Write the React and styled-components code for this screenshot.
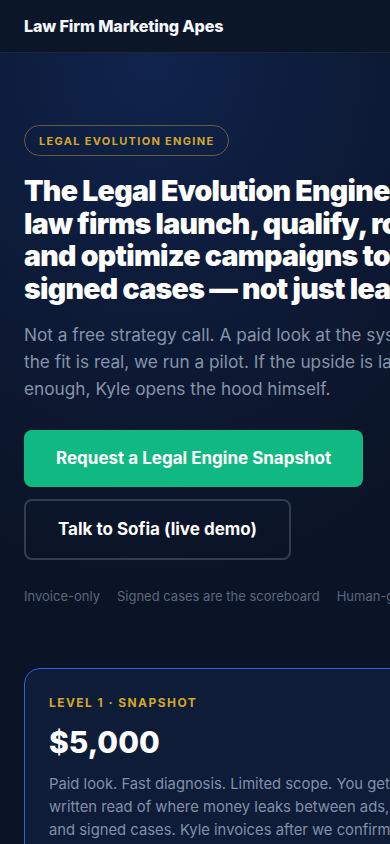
import React from "react"
import styled, { createGlobalStyle } from "styled-components"

const GlobalStyle = createGlobalStyle`
    * {
        box-sizing: border-box;
    }

    html, body {
        margin: 0;
        padding: 0;
        background: #0b1426;
        overflow-x: hidden;
    }

    body {
        font-family: Inter, "Noto Sans", "Liberation Sans", sans-serif;
        color: #ffffff;
        -webkit-font-smoothing: antialiased;
    }
`

const Page = styled.div`
    min-height: 844px;
    background: #0b1426;
    overflow: hidden;
`

const Header = styled.header`
    height: 53px;
    display: flex;
    align-items: center;
    padding: 0 24px;
    background: #0b1628;
    border-bottom: 1px solid #1c2638;

    .brand {
        font-size: 16.2px;
        font-weight: 800;
        letter-spacing: -0.01em;
        color: #f4f6fa;
    }
`

const Hero = styled.section`
    padding: 72px 24px 64px;
    background: radial-gradient(ellipse 420px 520px at 150px 0, #10234d 0%, #0d1a36 55%, #0b1426 100%);
`

const HeroInner = styled.div`
    width: 460px;
    display: flex;
    flex-direction: column;
    align-items: flex-start;
`

const Badge = styled.span`
    display: inline-flex;
    align-items: center;
    height: 31px;
    padding: 0 14px;
    border: 1px solid rgba(212, 167, 44, 0.45);
    border-radius: 999px;
    font-size: 11px;
    font-weight: 700;
    letter-spacing: 0.12em;
    color: #d4a72c;
    margin-bottom: 19px;
`

const Title = styled.h1`
    margin: 0 0 16px;
    font-size: 28.5px;
    line-height: 32.5px;
    font-weight: 900;
    letter-spacing: -0.025em;
    color: #ffffff;
`

const Lead = styled.p`
    margin: 0 0 28px;
    max-width: 430px;
    font-size: 17.25px;
    line-height: 27px;
    color: #8693a8;
`

const Actions = styled.div`
    display: flex;
    flex-wrap: wrap;
    gap: 12px;
    margin-bottom: 28px;
`

const Button = styled.a`
    display: inline-flex;
    align-items: center;
    justify-content: center;
    padding: 18px 32px;
    border-radius: 8px;
    font-size: 17px;
    line-height: 21px;
    font-weight: 700;
    color: #ffffff;
    text-decoration: none;
    background: ${(p) => (p.$primary ? "#10b981" : "transparent")};
    border: ${(p) => (p.$primary ? "none" : "2px solid #343d4f")};
`

const TrustRow = styled.div`
    display: flex;
    gap: 17px;
    white-space: nowrap;
    font-size: 13px;
    color: #5b677d;
`

const Plans = styled.section`
    padding: 0 24px;
`

const Card = styled.article`
    width: 446px;
    padding: 26px 24px 24px;
    border: 1px solid #2b62e3;
    border-radius: 16px;
    background: #0e1c38;

    .level {
        font-size: 12px;
        line-height: 15px;
        font-weight: 700;
        letter-spacing: 0.12em;
        color: #d4a72c;
        margin-bottom: 14px;
    }

    .price {
        font-size: 30px;
        line-height: 36px;
        font-weight: 800;
        color: #ffffff;
        margin-bottom: 13px;
    }

    .desc {
        margin: 0;
        max-width: 396px;
        font-size: 14.8px;
        line-height: 23px;
        color: #8190a7;
    }
`

export default function App() {
    return (
        <Page>
            <GlobalStyle />
            <Header>
                <div className="brand">Law Firm Marketing Apes</div>
            </Header>
            <Hero>
                <HeroInner>
                    <Badge>LEGAL EVOLUTION ENGINE</Badge>
                    <Title>
                        The Legal Evolution Engine helps law firms launch, qualify, route,
                        and optimize campaigns toward signed cases — not just leads.
                    </Title>
                    <Lead>
                        Not a free strategy call. A paid look at the system. If the fit is
                        real, we run a pilot. If the upside is large enough, Kyle opens the
                        hood himself.
                    </Lead>
                    <Actions>
                        <Button $primary href="#snapshot">Request a Legal Engine Snapshot</Button>
                        <Button href="#sofia">Talk to Sofia (live demo)</Button>
                    </Actions>
                    <TrustRow>
                        <span>Invoice-only</span>
                        <span>Signed cases are the scoreboard</span>
                        <span>Human-guided, AI-assisted</span>
                    </TrustRow>
                </HeroInner>
            </Hero>
            <Plans>
                <Card>
                    <div className="level">LEVEL 1 · SNAPSHOT</div>
                    <div className="price">$5,000</div>
                    <p className="desc">
                        Paid look. Fast diagnosis. Limited scope. You get a written read of
                        where money leaks between ads, intake, and signed cases. Kyle invoices
                        after we confirm fit.
                    </p>
                </Card>
            </Plans>
        </Page>
    )
}
